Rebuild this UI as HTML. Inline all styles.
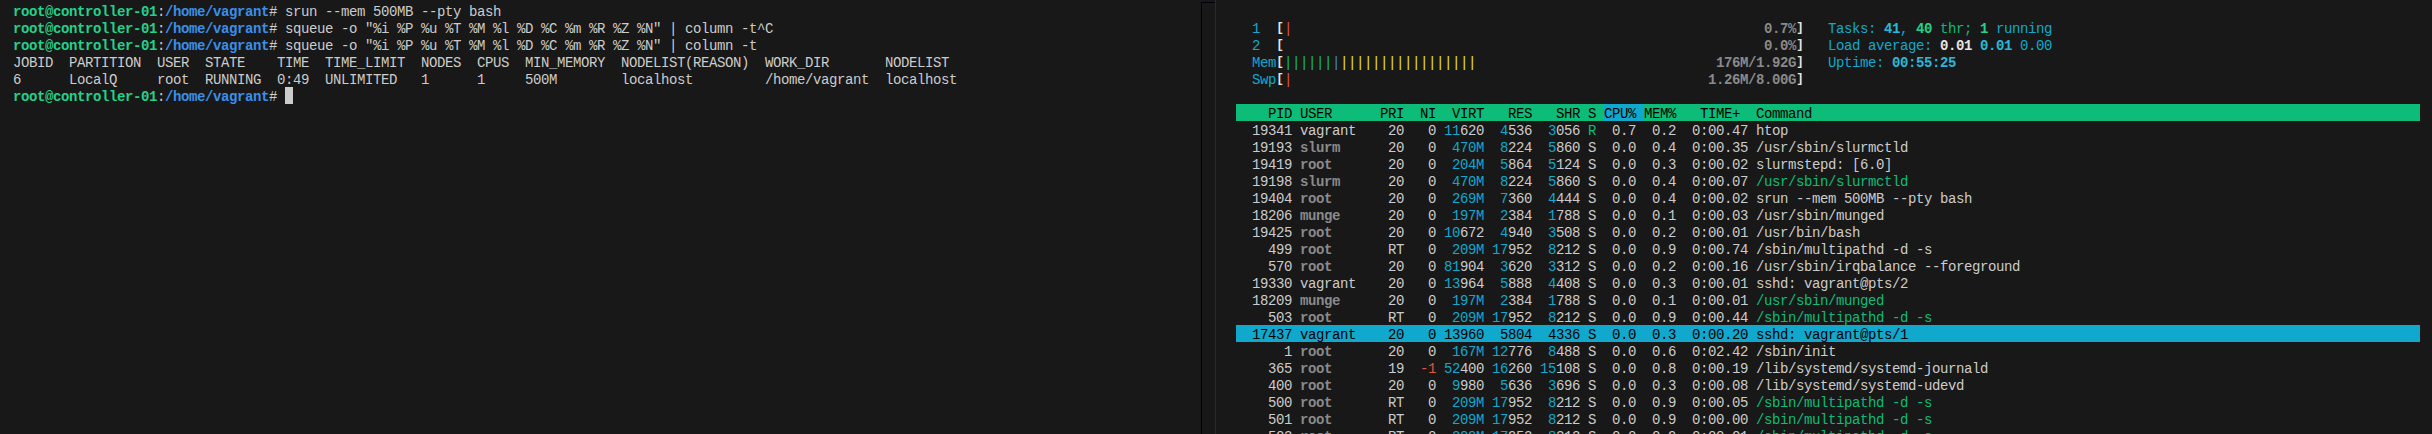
<!DOCTYPE html>
<html><head><meta charset="utf-8"><title>terminal</title>
<style>
html,body{margin:0;padding:0;background:#181818;}
body{width:2432px;height:434px;overflow:hidden;position:relative;
 font-family:"Liberation Mono",monospace;font-size:14.0px;letter-spacing:-0.4014px;color:#cccccc;
 font-kerning:none;font-variant-ligatures:none;}
.pane{position:absolute;top:2px;}
.r{height:17px;line-height:17px;position:relative;top:1.8px;white-space:pre;}
.r span{display:inline-block;height:17px;vertical-align:top;}
#L{left:13px;}
#R{left:1236px;width:1184px;}
.bg_{color:#23d18b;font-weight:bold;}
.bb_{color:#3b8eea;font-weight:bold;}
.w{color:#cccccc;}
.bw{color:#e5e5e5;font-weight:bold;}
.cy{color:#11a8cd;}
.bc{color:#29b8db;font-weight:bold;}
.gn{color:#0dbc79;}
.bgn{color:#23d18b;font-weight:bold;}
.gr{color:#8a8a8a;font-weight:bold;}
.rd{color:#e0553f;}
.r span.bk{width:8px;font-size:12.5px;letter-spacing:0;text-align:center;position:relative;top:-1px;}
.yl{color:#e5e510;}
.bl{color:#4285d6;}
.hdr,.selrow,.sel{color:#000;}
.bar{position:absolute;left:1236px;width:1184px;height:17px;}
#hb{top:104px;background:#0dbc79;}
#hc{position:absolute;top:104px;left:1604px;width:40px;height:17px;background:#11a8cd;}
#sb{top:325px;background:#11a8cd;}
#cur{position:absolute;left:285px;top:87px;width:8px;height:17px;background:#cccccc;}
#v1{position:absolute;left:1201px;top:2px;width:1px;height:432px;background:#000008;}
#h1{position:absolute;left:1201px;top:2px;width:14px;height:1px;background:#000008;}
#v2{position:absolute;left:1215px;top:0;width:1px;height:434px;background:#2b2b2b;}
</style></head><body>
<div id="v1"></div><div id="h1"></div><div id="v2"></div>
<div class="bar" id="hb"></div><div id="hc"></div><div class="bar" id="sb"></div>
<div id="cur"></div>
<div class="pane" id="L">
<div class="r"><span class="bg_">root@controller-01</span>:<span class="bb_">/home/vagrant</span># srun --mem 500MB --pty bash</div>
<div class="r"><span class="bg_">root@controller-01</span>:<span class="bb_">/home/vagrant</span># squeue -o "%i %P %u %T %M %l %D %C %m %R %Z %N" | column -t^C</div>
<div class="r"><span class="bg_">root@controller-01</span>:<span class="bb_">/home/vagrant</span># squeue -o "%i %P %u %T %M %l %D %C %m %R %Z %N" | column -t</div>
<div class="r">JOBID  PARTITION  USER  STATE    TIME  TIME_LIMIT  NODES  CPUS  MIN_MEMORY  NODELIST(REASON)  WORK_DIR       NODELIST</div>
<div class="r">6      LocalQ     root  RUNNING  0:49  UNLIMITED   1      1     500M        localhost         /home/vagrant  localhost</div>
<div class="r"><span class="bg_">root@controller-01</span>:<span class="bb_">/home/vagrant</span># </div>
</div>
<div class="pane" id="R">
<div class="r"></div>
<div class="r">  <span class="cy">1  </span><span class="bw bk">[</span><span class="rd">|</span>                                                           <span class="gr">0.7%</span><span class="bw bk">]</span>   <span class="cy">Tasks: </span><span class="bc">41</span><span class="cy">, </span><span class="bgn">40</span><span class="gn"> thr; </span><span class="bgn">1</span><span class="cy"> running</span></div>
<div class="r">  <span class="cy">2  </span><span class="bw bk">[</span>                                                            <span class="gr">0.0%</span><span class="bw bk">]</span>   <span class="cy">Load average: </span><span class="bw">0.01</span> <span class="bc">0.01</span> <span class="cy">0.00</span></div>
<div class="r">  <span class="cy">Mem</span><span class="bw bk">[</span><span class="gn">||||||</span><span class="bl">|</span><span class="yl">|||||||||||||||||</span>                              <span class="gr">176M/1.92G</span><span class="bw bk">]</span>   <span class="cy">Uptime: </span><span class="bc">00:55:25</span></div>
<div class="r">  <span class="cy">Swp</span><span class="bw bk">[</span><span class="rd">|</span>                                                    <span class="gr">1.26M/8.00G</span><span class="bw bk">]</span></div>
<div class="r"></div>
<div class="r"><span class="hdr">    PID USER      PRI  NI  VIRT   RES   SHR S <span class="sel">CPU% </span>MEM%   TIME+  Command                                                                            </span></div>
<div class="r"><span class="w">  19341 </span><span class="w">vagrant  </span> <span class="w"> 20 </span><span class="w">  0</span> <span class="cy">11</span><span class="w">620</span>  <span class="cy">4</span><span class="w">536</span>  <span class="cy">3</span><span class="w">056</span> <span class="gn">R</span> <span class="w"> 0.7  0.2  0:00.47 </span><span class="w">htop</span></div>
<div class="r"><span class="w">  19193 </span><span class="gr">slurm    </span> <span class="w"> 20 </span><span class="w">  0</span>  <span class="cy">470M</span>  <span class="cy">8</span><span class="w">224</span>  <span class="cy">5</span><span class="w">860</span> <span class="w">S</span> <span class="w"> 0.0  0.4  0:00.35 </span><span class="w">/usr/sbin/slurmctld</span></div>
<div class="r"><span class="w">  19419 </span><span class="gr">root     </span> <span class="w"> 20 </span><span class="w">  0</span>  <span class="cy">204M</span>  <span class="cy">5</span><span class="w">864</span>  <span class="cy">5</span><span class="w">124</span> <span class="w">S</span> <span class="w"> 0.0  0.3  0:00.02 </span><span class="w">slurmstepd: [6.0]</span></div>
<div class="r"><span class="w">  19198 </span><span class="gr">slurm    </span> <span class="w"> 20 </span><span class="w">  0</span>  <span class="cy">470M</span>  <span class="cy">8</span><span class="w">224</span>  <span class="cy">5</span><span class="w">860</span> <span class="w">S</span> <span class="w"> 0.0  0.4  0:00.07 </span><span class="gn">/usr/sbin/slurmctld</span></div>
<div class="r"><span class="w">  19404 </span><span class="gr">root     </span> <span class="w"> 20 </span><span class="w">  0</span>  <span class="cy">269M</span>  <span class="cy">7</span><span class="w">360</span>  <span class="cy">4</span><span class="w">444</span> <span class="w">S</span> <span class="w"> 0.0  0.4  0:00.02 </span><span class="w">srun --mem 500MB --pty bash</span></div>
<div class="r"><span class="w">  18206 </span><span class="gr">munge    </span> <span class="w"> 20 </span><span class="w">  0</span>  <span class="cy">197M</span>  <span class="cy">2</span><span class="w">384</span>  <span class="cy">1</span><span class="w">788</span> <span class="w">S</span> <span class="w"> 0.0  0.1  0:00.03 </span><span class="w">/usr/sbin/munged</span></div>
<div class="r"><span class="w">  19425 </span><span class="gr">root     </span> <span class="w"> 20 </span><span class="w">  0</span> <span class="cy">10</span><span class="w">672</span>  <span class="cy">4</span><span class="w">940</span>  <span class="cy">3</span><span class="w">508</span> <span class="w">S</span> <span class="w"> 0.0  0.2  0:00.01 </span><span class="w">/usr/bin/bash</span></div>
<div class="r"><span class="w">    499 </span><span class="gr">root     </span> <span class="w"> RT </span><span class="w">  0</span>  <span class="cy">209M</span> <span class="cy">17</span><span class="w">952</span>  <span class="cy">8</span><span class="w">212</span> <span class="w">S</span> <span class="w"> 0.0  0.9  0:00.74 </span><span class="w">/sbin/multipathd -d -s</span></div>
<div class="r"><span class="w">    570 </span><span class="gr">root     </span> <span class="w"> 20 </span><span class="w">  0</span> <span class="cy">81</span><span class="w">904</span>  <span class="cy">3</span><span class="w">620</span>  <span class="cy">3</span><span class="w">312</span> <span class="w">S</span> <span class="w"> 0.0  0.2  0:00.16 </span><span class="w">/usr/sbin/irqbalance --foreground</span></div>
<div class="r"><span class="w">  19330 </span><span class="w">vagrant  </span> <span class="w"> 20 </span><span class="w">  0</span> <span class="cy">13</span><span class="w">964</span>  <span class="cy">5</span><span class="w">888</span>  <span class="cy">4</span><span class="w">408</span> <span class="w">S</span> <span class="w"> 0.0  0.3  0:00.01 </span><span class="w">sshd: vagrant@pts/2</span></div>
<div class="r"><span class="w">  18209 </span><span class="gr">munge    </span> <span class="w"> 20 </span><span class="w">  0</span>  <span class="cy">197M</span>  <span class="cy">2</span><span class="w">384</span>  <span class="cy">1</span><span class="w">788</span> <span class="w">S</span> <span class="w"> 0.0  0.1  0:00.01 </span><span class="gn">/usr/sbin/munged</span></div>
<div class="r"><span class="w">    503 </span><span class="gr">root     </span> <span class="w"> RT </span><span class="w">  0</span>  <span class="cy">209M</span> <span class="cy">17</span><span class="w">952</span>  <span class="cy">8</span><span class="w">212</span> <span class="w">S</span> <span class="w"> 0.0  0.9  0:00.44 </span><span class="gn">/sbin/multipathd -d -s</span></div>
<div class="r"><span class="selrow">  17437 vagrant    20   0 13960  5804  4336 S  0.0  0.3  0:00.20 sshd: vagrant@pts/1                                                                </span></div>
<div class="r"><span class="w">      1 </span><span class="gr">root     </span> <span class="w"> 20 </span><span class="w">  0</span>  <span class="cy">167M</span> <span class="cy">12</span><span class="w">776</span>  <span class="cy">8</span><span class="w">488</span> <span class="w">S</span> <span class="w"> 0.0  0.6  0:02.42 </span><span class="w">/sbin/init</span></div>
<div class="r"><span class="w">    365 </span><span class="gr">root     </span> <span class="w"> 19 </span><span class="rd"> -1</span> <span class="cy">52</span><span class="w">400</span> <span class="cy">16</span><span class="w">260</span> <span class="cy">15</span><span class="w">108</span> <span class="w">S</span> <span class="w"> 0.0  0.8  0:00.19 </span><span class="w">/lib/systemd/systemd-journald</span></div>
<div class="r"><span class="w">    400 </span><span class="gr">root     </span> <span class="w"> 20 </span><span class="w">  0</span>  <span class="cy">9</span><span class="w">980</span>  <span class="cy">5</span><span class="w">636</span>  <span class="cy">3</span><span class="w">696</span> <span class="w">S</span> <span class="w"> 0.0  0.3  0:00.08 </span><span class="w">/lib/systemd/systemd-udevd</span></div>
<div class="r"><span class="w">    500 </span><span class="gr">root     </span> <span class="w"> RT </span><span class="w">  0</span>  <span class="cy">209M</span> <span class="cy">17</span><span class="w">952</span>  <span class="cy">8</span><span class="w">212</span> <span class="w">S</span> <span class="w"> 0.0  0.9  0:00.05 </span><span class="gn">/sbin/multipathd -d -s</span></div>
<div class="r"><span class="w">    501 </span><span class="gr">root     </span> <span class="w"> RT </span><span class="w">  0</span>  <span class="cy">209M</span> <span class="cy">17</span><span class="w">952</span>  <span class="cy">8</span><span class="w">212</span> <span class="w">S</span> <span class="w"> 0.0  0.9  0:00.00 </span><span class="gn">/sbin/multipathd -d -s</span></div>
<div class="r"><span class="w">    502 </span><span class="gr">root     </span> <span class="w"> RT </span><span class="w">  0</span>  <span class="cy">209M</span> <span class="cy">17</span><span class="w">952</span>  <span class="cy">8</span><span class="w">212</span> <span class="w">S</span> <span class="w"> 0.0  0.9  0:00.01 </span><span class="gn">/sbin/multipathd -d -s</span></div>
</div>
</body></html>
